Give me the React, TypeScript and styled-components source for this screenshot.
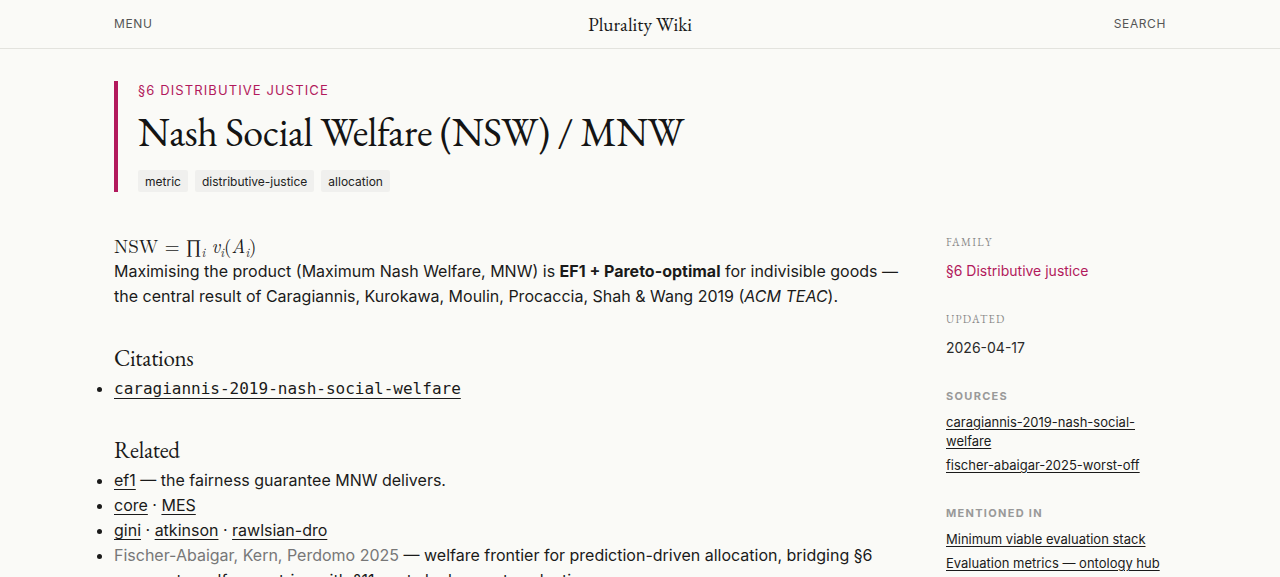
import * as React from 'react';
import styled, { createGlobalStyle } from 'styled-components';

const accent = '#b2195c';
const serif = '"EB Garamond", "Liberation Serif", "DejaVu Serif", serif';
const sans = 'Inter, "Noto Sans", sans-serif';
const mono = '"DejaVu Sans Mono", "Liberation Mono", monospace';

const GlobalStyle = createGlobalStyle`
  html, body {
    margin: 0;
    padding: 0;
    background: #fafaf7;
    color: #1a1a1a;
    font-family: ${sans};
  }
`;

const TopBar = styled.header`
  height: 48px;
  border-bottom: 1px solid #e3e3de;
`;

const TopInner = styled.div`
  max-width: 1052px;
  height: 100%;
  margin: 0 auto;
  display: grid;
  grid-template-columns: 1fr auto 1fr;
  align-items: center;
`;

const NavLink = styled.a<{ $end?: boolean }>`
  justify-self: ${p => (p.$end ? 'end' : 'start')};
  margin-top: -1px;
  font-size: 12px;
  letter-spacing: 0.6px;
  color: #555;
  text-decoration: none;
  text-transform: uppercase;
`;

const Brand = styled.a`
  font-family: ${serif};
  font-size: 19.5px;
  color: #1a1a1a;
  text-decoration: none;
`;

const Page = styled.main`
  max-width: 1052px;
  margin: 0 auto;
  padding-top: 32px;
`;

const TitleBlock = styled.section`
  border-left: 4px solid ${accent};
  padding-left: 20px;
`;

const Eyebrow = styled.div`
  font-size: 13px;
  line-height: 18px;
  letter-spacing: 1.1px;
  color: ${accent};
  text-transform: uppercase;
`;

const Title = styled.h1`
  margin: 8px 0 0;
  font-family: ${serif};
  font-weight: 400;
  font-size: 40px;
  line-height: 50px;
  letter-spacing: -0.4px;
  color: #141414;
`;

const Tags = styled.div`
  display: flex;
  gap: 7px;
  margin-top: 13px;
`;

const Tag = styled.span`
  display: inline-flex;
  align-items: center;
  height: 22px;
  padding: 0 7px;
  background: #f0f0ee;
  border-radius: 2px;
  font-size: 12px;
  color: #222;
`;

const Columns = styled.div`
  display: grid;
  grid-template-columns: 1fr 220px;
  column-gap: 48px;
  margin-top: 40px;
`;

const Article = styled.article`
  padding-top: 1px;
  font-size: 16px;
  line-height: 25px;
`;

const Formula = styled.div`
  font-family: "Latin Modern Roman", "Liberation Serif", serif;
  font-size: 19px;
  line-height: 26px;
`;

const Sub = styled.sub`
  font-size: 12px;
  font-style: italic;
  vertical-align: -4px;
  line-height: 0;
`;

const Para = styled.p`
  margin: 0;
`;

const SectionHeading = styled.h2`
  margin: 35px 0 4px;
  font-family: ${serif};
  font-weight: 400;
  font-size: 23px;
  line-height: 28px;
  letter-spacing: -0.3px;
`;

const List = styled.ul`
  margin: 0;
  padding-left: 0;
`;

const Item = styled.li`
  line-height: 25px;
`;

const TextLink = styled.a<{ $muted?: boolean }>`
  color: ${p => (p.$muted ? '#777' : '#1a1a1a')};
  text-decoration: ${p => (p.$muted ? 'none' : 'underline')};
  text-underline-offset: 3px;
  text-decoration-thickness: 1px;
`;

const CodeLink = styled.a`
  font-family: ${mono};
  font-size: 16px;
  line-height: 25px;
  color: #1a1a1a;
  text-decoration: underline;
  text-underline-offset: 4px;
`;

const Aside = styled.aside`
  padding-top: 3px;
`;

const AsideSection = styled.div`
  margin-bottom: 31px;
`;

const SerifLabel = styled.div`
  font-family: ${serif};
  font-size: 11px;
  line-height: 14px;
  letter-spacing: 1.3px;
  color: #8a8a8a;
  text-transform: uppercase;
`;

const SansLabel = styled.div`
  font-size: 11px;
  line-height: 14px;
  font-weight: 700;
  letter-spacing: 1.3px;
  color: #999;
  text-transform: uppercase;
`;

const AsideValue = styled.div<{ $accent?: boolean }>`
  margin-top: 12px;
  font-size: 14px;
  line-height: 20px;
  color: ${p => (p.$accent ? accent : '#2a2a2a')};
`;

const AsideLinks = styled.div`
  margin-top: 10px;
  display: flex;
  flex-direction: column;
  gap: 5px;
`;

const AsideLink = styled.a`
  font-size: 13px;
  line-height: 19px;
  color: #1a1a1a;
  text-decoration: underline;
  text-underline-offset: 2px;
`;

const App: React.FC = () => {
  return (
    <>
      <GlobalStyle />
      <TopBar>
        <TopInner>
          <NavLink href="#">Menu</NavLink>
          <Brand href="#">Plurality Wiki</Brand>
          <NavLink href="#" $end>
            Search
          </NavLink>
        </TopInner>
      </TopBar>
      <Page>
        <TitleBlock>
          <Eyebrow>§6 Distributive justice</Eyebrow>
          <Title>Nash Social Welfare (NSW) / MNW</Title>
          <Tags>
            <Tag>metric</Tag>
            <Tag>distributive-justice</Tag>
            <Tag>allocation</Tag>
          </Tags>
        </TitleBlock>

        <Columns>
          <Article>
            <Formula>
              NSW = ∏<Sub>i</Sub> <i>v</i>
              <Sub>i</Sub>(<i>A</i>
              <Sub>i</Sub>)
            </Formula>
            <Para>
              Maximising the product (Maximum Nash Welfare, MNW) is <b>EF1 + Pareto-optimal</b> for
              indivisible goods — the central result of Caragiannis, Kurokawa, Moulin, Procaccia, Shah
              &amp; Wang 2019 (<i>ACM TEAC</i>).
            </Para>

            <SectionHeading>Citations</SectionHeading>
            <List>
              <Item>
                <CodeLink href="#">caragiannis-2019-nash-social-welfare</CodeLink>
              </Item>
            </List>

            <SectionHeading>Related</SectionHeading>
            <List>
              <Item>
                <TextLink href="#">ef1</TextLink> — the fairness guarantee MNW delivers.
              </Item>
              <Item>
                <TextLink href="#">core</TextLink> · <TextLink href="#">MES</TextLink>
              </Item>
              <Item>
                <TextLink href="#">gini</TextLink> · <TextLink href="#">atkinson</TextLink> ·{' '}
                <TextLink href="#">rawlsian-dro</TextLink>
              </Item>
              <Item>
                <TextLink href="#" $muted>
                  Fischer-Abaigar, Kern, Perdomo 2025
                </TextLink>{' '}
                — welfare frontier for prediction-driven allocation, bridging §6 aggregate welfare
                metrics with §11 post-deployment evaluation.
              </Item>
            </List>
          </Article>

          <Aside>
            <AsideSection>
              <SerifLabel>Family</SerifLabel>
              <AsideValue $accent>§6 Distributive justice</AsideValue>
            </AsideSection>
            <AsideSection>
              <SerifLabel>Updated</SerifLabel>
              <AsideValue>2026-04-17</AsideValue>
            </AsideSection>
            <AsideSection>
              <SansLabel>Sources</SansLabel>
              <AsideLinks>
                <AsideLink href="#">caragiannis-2019-nash-social-welfare</AsideLink>
                <AsideLink href="#">fischer-abaigar-2025-worst-off</AsideLink>
              </AsideLinks>
            </AsideSection>
            <AsideSection>
              <SansLabel>Mentioned in</SansLabel>
              <AsideLinks>
                <AsideLink href="#">Minimum viable evaluation stack</AsideLink>
                <AsideLink href="#">Evaluation metrics — ontology hub</AsideLink>
              </AsideLinks>
            </AsideSection>
          </Aside>
        </Columns>
      </Page>
    </>
  );
};

export default App;
